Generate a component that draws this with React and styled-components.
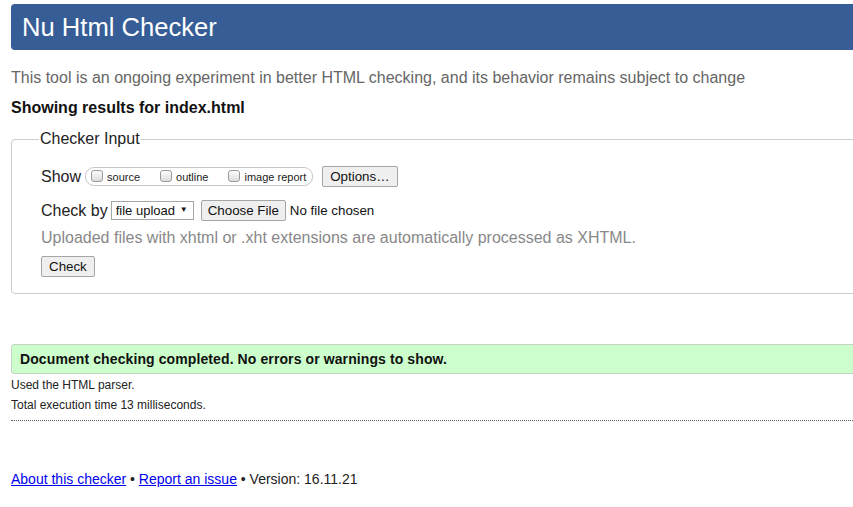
import React from 'react';
import styled, { createGlobalStyle } from 'styled-components';

const GlobalStyle = createGlobalStyle`
  html, body {
    margin: 0;
    padding: 0;
    background: #fff;
    overflow: hidden;
  }
  body {
    font-family: "Liberation Sans", Arial, sans-serif;
    color: #222;
  }
`;

const Page = styled.div`
  width: 960px;
  padding: 4px 0 0 11px;
`;

const Header = styled.h1`
  margin: 0;
  height: 46px;
  padding-left: 11px;
  background: #365d96;
  border-radius: 4px;
  color: #fff;
  font-size: 25.6px;
  font-weight: normal;
  line-height: 46px;
`;

const Intro = styled.p`
  margin: 19px 0 0;
  font-size: 16px;
  line-height: 18px;
  color: #666;
`;

const Showing = styled.p`
  margin: 12px 0 0;
  font-size: 16px;
  line-height: 18px;
  font-weight: bold;
  color: #111;
`;

const Fieldset = styled.fieldset`
  margin: 13px 0 0;
  padding: 18px 28px 16px 29px;
  border: 1px solid #ccc;
  border-radius: 4px;
`;

const Legend = styled.legend`
  padding: 0 1px;
  margin-left: -2px;
  font-size: 16px;
  line-height: 18px;
  color: #222;
`;

const Row = styled.div`
  display: flex;
  align-items: center;
  height: 21px;
  margin-top: ${(p) => p.$gap || 0}px;
  font-size: 16px;
`;

const RowLabel = styled.span`
  margin-right: ${(p) => p.$space || 4}px;
  color: #222;
`;

const Pill = styled.span`
  display: inline-flex;
  align-items: center;
  height: 17px;
  padding: 0 6px 0 5px;
  border: 1px solid #c8c8c8;
  border-radius: 9px;
`;

const CheckLabel = styled.label`
  display: inline-flex;
  align-items: center;
  margin-right: ${(p) => p.$last ? 0 : 20}px;
  font-size: 11px;
  color: #222;
`;

const Box = styled.input.attrs({ type: 'checkbox' })`
  appearance: none;
  width: 12px;
  height: 12px;
  margin: 0 4px 2px 0;
  border: 1px solid #9a9a9a;
  border-radius: 3px;
  background: linear-gradient(#fcfcfc, #dcdcdc);
`;

const Button = styled.button`
  height: ${(p) => p.$h || 21}px;
  padding: 0 ${(p) => p.$pad || 8}px;
  margin-left: ${(p) => p.$left || 0}px;
  border: 1px solid #a6a6a6;
  border-radius: 2px;
  background: #efefef;
  font-family: "Liberation Sans", Arial, sans-serif;
  font-size: 13.33px;
  color: #111;
`;

const SelectWrap = styled.span`
  position: relative;
  display: inline-block;
`;

const Select = styled.select`
  appearance: none;
  width: 83px;
  height: 19px;
  padding: 0 0 0 4px;
  border: 1px solid #a6a6a6;
  border-radius: 0;
  background: #fff;
  font-family: "Liberation Sans", Arial, sans-serif;
  font-size: 13px;
  color: #111;
`;

const Arrow = styled.span`
  position: absolute;
  right: 6px;
  top: 4px;
  font-size: 8px;
  color: #111;
  pointer-events: none;
`;

const FileName = styled.span`
  margin-left: 4px;
  font-size: 13.33px;
  color: #111;
`;

const Hint = styled.p`
  margin: 8px 0 0;
  font-size: 16px;
  line-height: 18px;
  color: #888;
`;

const CheckRow = styled.div`
  margin-top: 9px;
`;

const Success = styled.div`
  margin-top: 50px;
  height: 28px;
  padding-left: 8px;
  background: #ccffcc;
  border: 1px solid #c4d4c4;
  border-radius: 3px;
  font-size: 14px;
  font-weight: bold;
  letter-spacing: 0.1px;
  line-height: 28px;
  color: #111;
`;

const Details = styled.div`
  margin-top: 1px;
  font-size: 12px;
  line-height: 20px;
  color: #222;
`;

const DetailLine = styled.p`
  margin: 0;
`;

const Rule = styled.hr`
  margin: 5px 0 0;
  border: 0;
  border-top: 1px dotted #555;
`;

const Footer = styled.p`
  margin: 50px 0 0;
  font-size: 14px;
  line-height: 16px;
  color: #222;
`;

const FootLink = styled.a`
  color: #0000ee;
  text-decoration: underline;
`;

export default function App() {
  return (
    <Page>
      <GlobalStyle />
      <Header>Nu Html Checker</Header>
      <Intro>
        This tool is an ongoing experiment in better HTML checking, and its behavior remains subject to change
      </Intro>
      <Showing>Showing results for index.html</Showing>
      <Fieldset>
        <Legend>Checker Input</Legend>
        <Row>
          <RowLabel $space={4}>Show</RowLabel>
          <Pill>
            <CheckLabel><Box />source</CheckLabel>
            <CheckLabel><Box />outline</CheckLabel>
            <CheckLabel $last><Box />image report</CheckLabel>
          </Pill>
          <Button $left={9} $pad={7}>Options…</Button>
        </Row>
        <Row $gap={13}>
          <RowLabel $space={3}>Check by</RowLabel>
          <SelectWrap>
            <Select defaultValue="file">
              <option value="file">file upload</option>
            </Select>
            <Arrow>▼</Arrow>
          </SelectWrap>
          <Button $left={7} $pad={6}>Choose File</Button>
          <FileName>No file chosen</FileName>
        </Row>
        <Hint>Uploaded files with xhtml or .xht extensions are automatically processed as XHTML.</Hint>
        <CheckRow>
          <Button $pad={7}>Check</Button>
        </CheckRow>
      </Fieldset>
      <Success>Document checking completed. No errors or warnings to show.</Success>
      <Details>
        <DetailLine>Used the HTML parser.</DetailLine>
        <DetailLine>Total execution time 13 milliseconds.</DetailLine>
      </Details>
      <Rule />
      <Footer>
        <FootLink href="#">About this checker</FootLink> • <FootLink href="#">Report an issue</FootLink> • Version: 16.11.21
      </Footer>
    </Page>
  );
}
